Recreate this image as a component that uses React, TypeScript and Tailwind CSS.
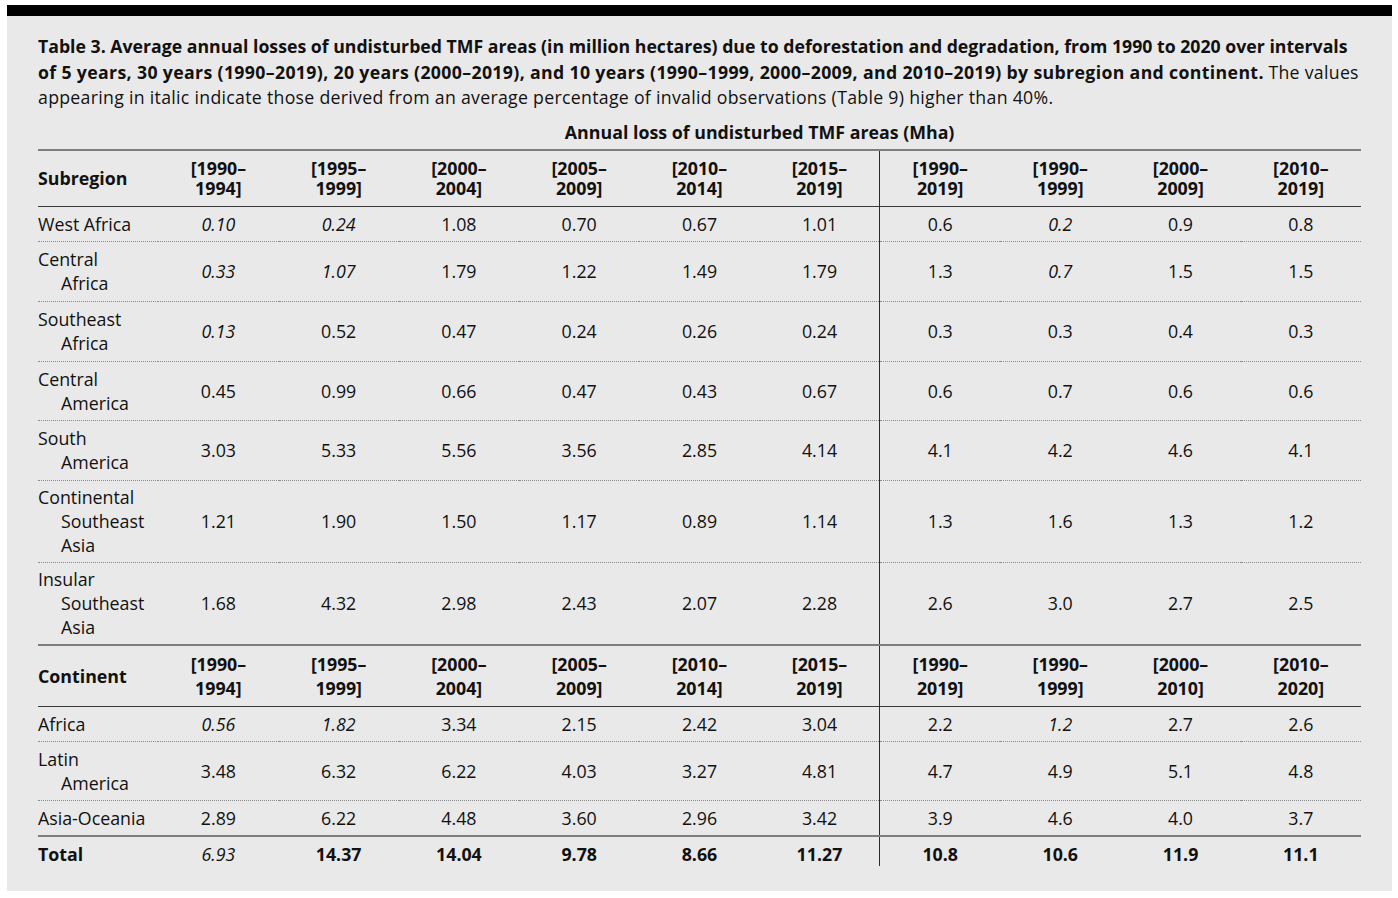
import React from "react";

type Cell = { v: string; i?: boolean; b?: boolean };

const c = (s: string): Cell => {
  if (s.startsWith("*")) return { v: s.slice(1), i: true };
  if (s.startsWith("!")) return { v: s.slice(1), b: true };
  return { v: s };
};

const subHeads = [
  ["[1990–", "1994]"],
  ["[1995–", "1999]"],
  ["[2000–", "2004]"],
  ["[2005–", "2009]"],
  ["[2010–", "2014]"],
  ["[2015–", "2019]"],
  ["[1990–", "2019]"],
  ["[1990–", "1999]"],
  ["[2000–", "2009]"],
  ["[2010–", "2019]"],
];
const contHeads = [
  ["[1990–", "1994]"],
  ["[1995–", "1999]"],
  ["[2000–", "2004]"],
  ["[2005–", "2009]"],
  ["[2010–", "2014]"],
  ["[2015–", "2019]"],
  ["[1990–", "2019]"],
  ["[1990–", "1999]"],
  ["[2000–", "2010]"],
  ["[2010–", "2020]"],
];

type Row = { label: string[]; vals: string[]; last?: "solid"; pad: string };

const subRows: Row[] = [
  { label: ["West Africa"], pad: "py-[5px]", vals: ["*0.10", "*0.24", "1.08", "0.70", "0.67", "1.01", "0.6", "*0.2", "0.9", "0.8"] },
  { label: ["Central", "Africa"], pad: "py-[5.5px]", vals: ["*0.33", "*1.07", "1.79", "1.22", "1.49", "1.79", "1.3", "*0.7", "1.5", "1.5"] },
  { label: ["Southeast", "Africa"], pad: "py-[5.5px]", vals: ["*0.13", "0.52", "0.47", "0.24", "0.26", "0.24", "0.3", "0.3", "0.4", "0.3"] },
  { label: ["Central", "America"], pad: "py-[5px]", vals: ["0.45", "0.99", "0.66", "0.47", "0.43", "0.67", "0.6", "0.7", "0.6", "0.6"] },
  { label: ["South", "America"], pad: "py-[5.5px]", vals: ["3.03", "5.33", "5.56", "3.56", "2.85", "4.14", "4.1", "4.2", "4.6", "4.1"] },
  { label: ["Continental", "Southeast", "Asia"], pad: "py-[4.5px]", vals: ["1.21", "1.90", "1.50", "1.17", "0.89", "1.14", "1.3", "1.6", "1.3", "1.2"] },
  { label: ["Insular", "Southeast", "Asia"], pad: "py-[4.5px]", vals: ["1.68", "4.32", "2.98", "2.43", "2.07", "2.28", "2.6", "3.0", "2.7", "2.5"], last: "solid" },
];

const contRows: Row[] = [
  { label: ["Africa"], pad: "py-[5px]", vals: ["*0.56", "*1.82", "3.34", "2.15", "2.42", "3.04", "2.2", "*1.2", "2.7", "2.6"] },
  { label: ["Latin", "America"], pad: "py-[5px]", vals: ["3.48", "6.32", "6.22", "4.03", "3.27", "4.81", "4.7", "4.9", "5.1", "4.8"] },
  { label: ["Asia-Oceania"], pad: "py-[5px]", vals: ["2.89", "6.22", "4.48", "3.60", "2.96", "3.42", "3.9", "4.6", "4.0", "3.7"], last: "solid" },
];

const totals = ["*6.93", "!14.37", "!14.04", "!9.78", "!8.66", "!11.27", "!10.8", "!10.6", "!11.9", "!11.1"];

function HeadRow({ title, heads, topBorder, cell }: { title: string; heads: string[][]; topBorder: string; cell: string }) {
  return (
    <tr className={`${topBorder} border-b border-b-[#3a3a3a]`}>
      <th className={`text-left font-bold px-0 align-middle ${cell}`}>{title}</th>
      {heads.map((h, k) => (
        <th
          key={k}
          className={`font-bold text-center align-middle ${cell} ${k === 6 ? "border-l border-l-[#2a2a2a]" : ""}`}
        >
          <div>{h[0]}</div>
          <div>{h[1]}</div>
        </th>
      ))}
    </tr>
  );
}

function DataRow({ r }: { r: Row }) {
  const border =
    r.last === "solid" ? "border-b-2 border-b-[#7d7d7d]" : "border-b border-dotted border-b-[#8a8a8a]";
  return (
    <tr className={border}>
      <td className={`${r.pad} leading-[24px] align-middle text-left`}>
        {r.label.map((l, k) => (
          <div key={k} className={k > 0 ? "pl-[23px]" : ""}>
            {l}
          </div>
        ))}
      </td>
      {r.vals.map((s, k) => {
        const x = c(s);
        return (
          <td
            key={k}
            className={`${r.pad} leading-[24px] align-middle text-center ${x.i ? "italic" : ""} ${
              k === 6 ? "border-l border-l-[#2a2a2a]" : ""
            }`}
          >
            {x.v}
          </td>
        );
      })}
    </tr>
  );
}

export default function App() {
  return (
    <div className="w-[1398px] h-[898px] bg-white pt-[5px] pl-[7px] pr-[6px]" style={{ fontFamily: '"Open Sans", "Noto Sans", sans-serif' }}>
      <div className="bg-[#e9e9e9] h-[886px] text-[#111]">
        <div className="h-[11px] bg-black" />
        <div className="px-[31px] pt-[18px]">
          <p className="text-[17.7px] leading-[25.5px] whitespace-nowrap">
            <span className="font-bold">
              Table 3. Average annual losses of undisturbed TMF areas (in million hectares) due to deforestation and degradation, from 1990 to 2020 over intervals
              <br />
              <span className="tracking-[0.35px]">
                of 5 years, 30 years (1990–2019), 20 years (2000–2019), and 10 years (1990–1999, 2000–2009, and 2010–2019) by subregion and continent.
              </span>
            </span>{" "}
            <span className="tracking-[0.3px]">
              The values
              <br />
              appearing in italic indicate those derived from an average percentage of invalid observations (Table 9) higher than 40%.
            </span>
          </p>
          <table className="w-[1323px] table-fixed border-collapse text-[17.8px] mt-[9px]">
            <tbody>
              <tr>
                <td />
                <td colSpan={10} className="text-center font-bold h-[30px] leading-[20px] align-middle pb-[5px]">
                  Annual loss of undisturbed TMF areas (Mha)
                </td>
              </tr>
              <HeadRow title="Subregion" heads={subHeads} topBorder="border-t-2 border-t-[#7d7d7d]" cell="pt-[7px] pb-[8px] leading-[20px]" />
              {subRows.map((r, k) => (
                <DataRow key={k} r={r} />
              ))}
              <HeadRow title="Continent" heads={contHeads} topBorder="" cell="py-[6px] leading-[24px]" />
              {contRows.map((r, k) => (
                <DataRow key={k} r={r} />
              ))}
              <tr>
                <td className="font-bold pt-[7px] pb-0 leading-[20px] text-left align-top">Total</td>
                {totals.map((s, k) => {
                  const x = c(s);
                  return (
                    <td
                      key={k}
                      className={`pt-[7px] pb-[2px] leading-[20px] text-center align-top ${x.i ? "italic" : ""} ${
                        x.b ? "font-bold" : ""
                      } ${k === 6 ? "border-l border-l-[#2a2a2a]" : ""}`}
                    >
                      {x.v}
                    </td>
                  );
                })}
              </tr>
            </tbody>
          </table>
        </div>
      </div>
    </div>
  );
}
